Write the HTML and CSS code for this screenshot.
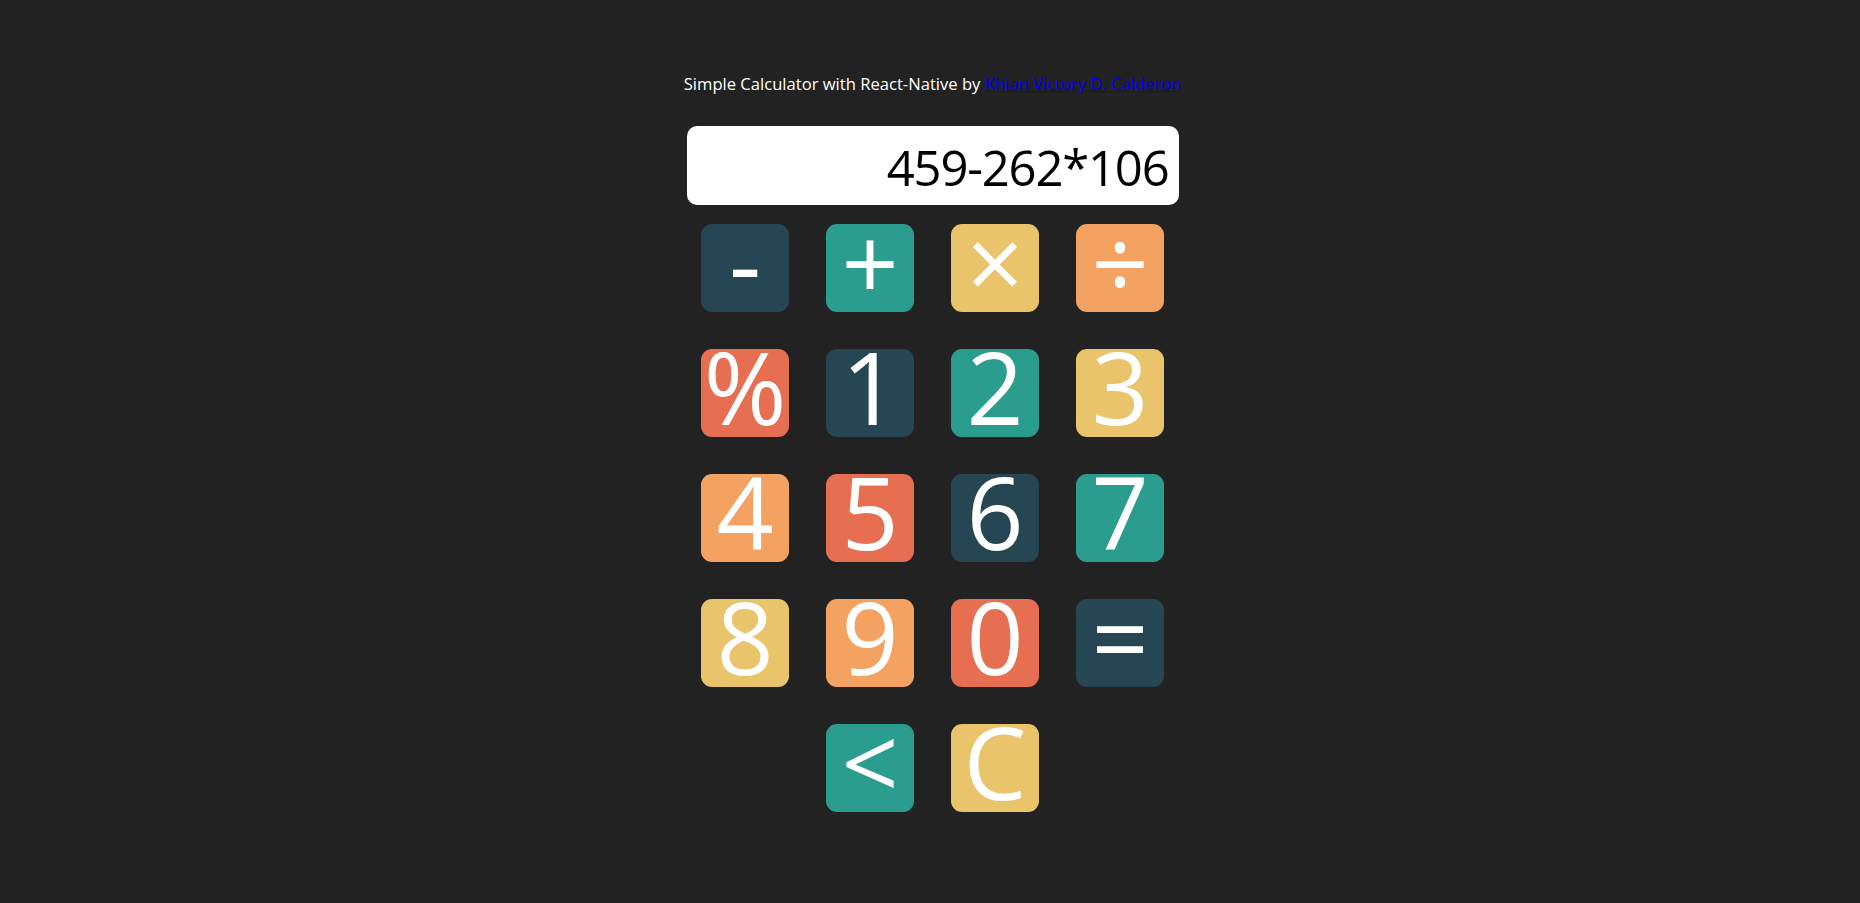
FILE: index.html
```html
<!DOCTYPE html>
<html>
<head>
<meta charset="utf-8">
<title>Simple Calculator</title>
<link rel="stylesheet" href="styles.css">
</head>
<body>
<main class="app">
  <p class="title">Simple Calculator with React-Native by <a href="#" class="author">Khian Victory D. Calderon</a></p>
  <div class="display">459-262*106</div>
  <div class="keys">
    <button class="key c-dark key-minus">-</button>
    <button class="key c-teal">+</button>
    <button class="key c-yellow">×</button>
    <button class="key c-orange">÷</button>
    <button class="key c-red">%</button>
    <button class="key c-dark">1</button>
    <button class="key c-teal">2</button>
    <button class="key c-yellow">3</button>
    <button class="key c-orange">4</button>
    <button class="key c-red">5</button>
    <button class="key c-dark">6</button>
    <button class="key c-teal">7</button>
    <button class="key c-yellow">8</button>
    <button class="key c-orange">9</button>
    <button class="key c-red">0</button>
    <button class="key c-dark">=</button>
    <button class="key c-teal">&lt;</button>
    <button class="key c-yellow">C</button>
  </div>
</main>
</body>
</html>
```
FILE: styles.css
```css
html, body {
  margin: 0;
  padding: 0;
  background: #222222;
  height: 100%;
}
body {
  font-family: "Open Sans", "Noto Sans", sans-serif;
}
.app {
  display: flex;
  flex-direction: column;
  align-items: center;
  padding-top: 73px;
  padding-left: 5px;
}
.title {
  margin: 0;
  color: #ffffff;
  font-size: 16.6px;
  line-height: 22px;
}
.author {
  color: #0000ee;
  text-decoration: underline;
}
.display {
  margin-top: 31px;
  box-sizing: border-box;
  width: 492px;
  height: 79px;
  background: #ffffff;
  border-radius: 10px;
  display: flex;
  align-items: center;
  justify-content: flex-end;
  padding-right: 10px;
  padding-top: 3px;
  font-size: 49px;
  letter-spacing: -1.2px;
  color: #000000;
}
.keys {
  margin-top: 19px;
  width: 463px;
  display: flex;
  flex-wrap: wrap;
  justify-content: center;
  gap: 37px;
}
.key {
  box-sizing: border-box;
  width: 88px;
  height: 88px;
  border: none;
  border-radius: 11px;
  padding: 0 0 15px 0;
  margin: 0;
  color: #ffffff;
  font-family: "Open Sans", "Noto Sans", sans-serif;
  font-size: 100px;
  line-height: 80px;
  display: flex;
  align-items: center;
  justify-content: center;
  overflow: visible;
}
.c-dark { background: #264653; }
.c-teal { background: #2a9d8f; }
.c-yellow { background: #e9c46a; }
.c-orange { background: #f4a261; }
.c-red { background: #e76f51; }
```
